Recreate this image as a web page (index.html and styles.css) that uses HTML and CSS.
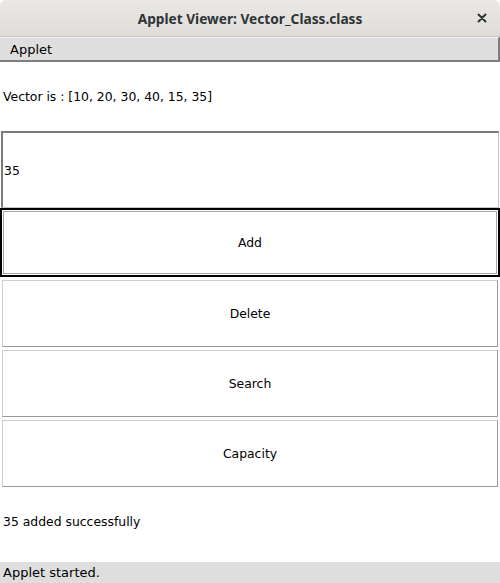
FILE: index.html
```html
<!DOCTYPE html>
<html lang="en">
<head>
    <meta charset="UTF-8">
    <title>Applet Viewer: Vector_Class.class</title>
    <link rel="stylesheet" href="styles.css">
</head>
<body>

<div class="window">
    <div class="titlebar">
        <span class="title">Applet Viewer: Vector_Class.class</span>
        <svg class="close" width="10" height="10" viewBox="0 0 10 10">
            <path d="M1.5 1.5 L8.5 8.5 M8.5 1.5 L1.5 8.5" stroke="#2e3436" stroke-width="2" stroke-linecap="round"/>
        </svg>
    </div>
    <div class="menubar"><span class="menu">Applet</span></div>

    <div class="applet">
        <div class="label">Vector is : [10, 20, 30, 40, 15, 35]</div>
        <div class="textfield">35</div>
        <div class="btn focused">Add</div>
        <div class="btn">Delete</div>
        <div class="btn">Search</div>
        <div class="btn">Capacity</div>
        <div class="message">35 added successfully</div>
    </div>

    <div class="status">Applet started.</div>
</div>

</body>
</html>
```

FILE: styles.css
```css
body {
    margin: 0;
    font-family: "DejaVu Sans", sans-serif;
    font-size: 12.4px;
    color: #000;
    background-color: #fff;
}
.window {
    width: 500px;
    height: 583px;
    display: flex;
    flex-direction: column;
    overflow: hidden;
}
.titlebar {
    height: 36px;
    background: linear-gradient(#eae8e6, #dfdcd8);
    border-bottom: 1px solid #c7c2bc;
    border-radius: 6px 6px 0 0;
    display: flex;
    align-items: center;
    justify-content: center;
    position: relative;
    flex-shrink: 0;
}
.title {
    font-family: "Noto Sans", sans-serif;
    font-weight: bold;
    font-size: 13.7px;
    color: #2e3436;
}
.close {
    position: absolute;
    right: 13px;
    top: 13px;
}
.menubar {
    height: 22px;
    background-color: #dedede;
    border-top: 1px solid #f4f4f4;
    border-bottom: 2px solid #7f7f7f;
    border-right: 2px solid #7f7f7f;
    display: flex;
    align-items: center;
    flex-shrink: 0;
}
.menu {
    padding-left: 10px;
    font-size: 13px;
}
.applet {
    flex: 1;
    display: flex;
    flex-direction: column;
}
.label {
    height: 69px;
    padding-left: 3px;
    display: flex;
    align-items: center;
}
.textfield {
    height: 74px;
    margin: 0 1px;
    padding-left: 1px;
    border-top: 2px solid #7a7a7a;
    border-left: 2px solid #7a7a7a;
    border-right: 1px solid #c4c4c4;
    border-bottom: 1px solid #c4c4c4;
    display: flex;
    align-items: center;
}
.btn {
    height: 65px;
    margin: 3px 2px 0;
    border-top: 1px solid #cdcdcd;
    border-left: 1px solid #cdcdcd;
    border-right: 1px solid #9a9a9a;
    border-bottom: 1px solid #9a9a9a;
    display: flex;
    align-items: center;
    justify-content: center;
}
.btn.focused {
    height: 65px;
    margin: 0;
    border: 2px solid #000;
    box-shadow: inset 0 0 0 1px #fff, inset 0 0 0 2px #a6a6a6;
}
.message {
    margin-top: 27px;
    padding-left: 3px;
    line-height: 16px;
}
.status {
    height: 21px;
    background-color: #dedede;
    padding-left: 3px;
    font-size: 13px;
    display: flex;
    align-items: center;
    flex-shrink: 0;
}
```
